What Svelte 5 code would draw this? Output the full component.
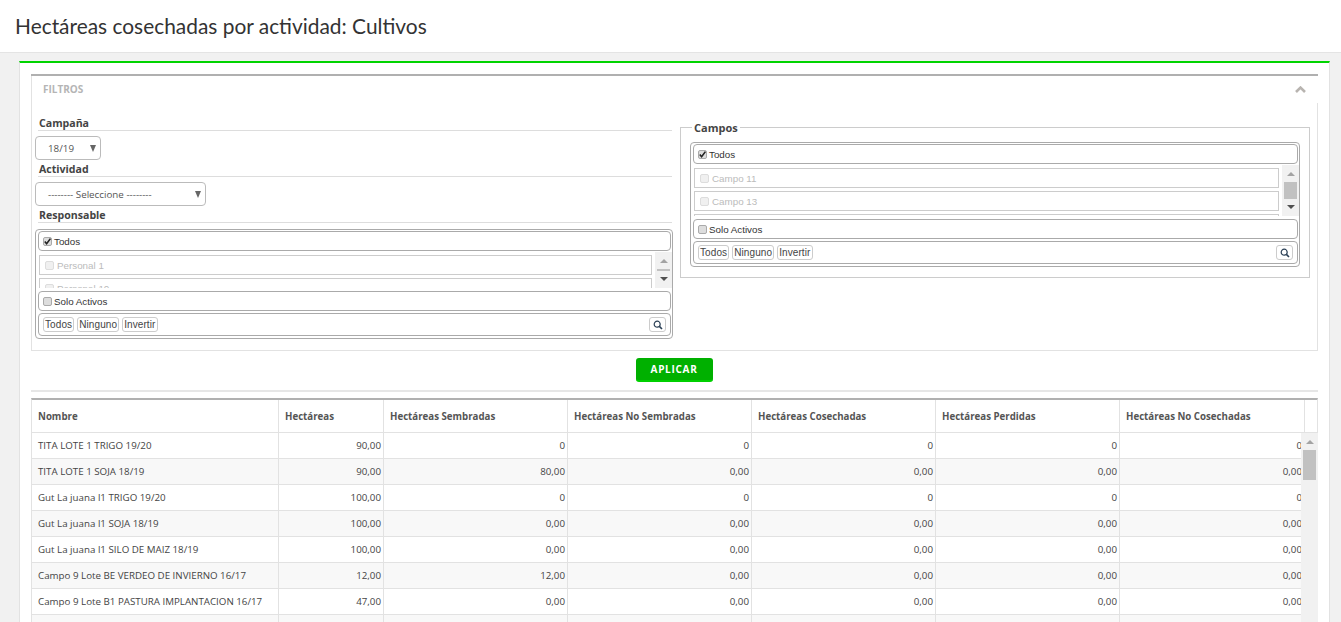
<script>
  const columns = [
    { label: 'Nombre', width: 247 },
    { label: 'Hectáreas', width: 105 },
    { label: 'Hectáreas Sembradas', width: 184 },
    { label: 'Hectáreas No Sembradas', width: 184 },
    { label: 'Hectáreas Cosechadas', width: 184 },
    { label: 'Hectáreas Perdidas', width: 184 },
    { label: 'Hectáreas No Cosechadas', width: 185 }
  ];
  const rows = [
    ['TITA LOTE 1 TRIGO 19/20', '90,00', '0', '0', '0', '0', '0'],
    ['TITA LOTE 1 SOJA 18/19', '90,00', '80,00', '0,00', '0,00', '0,00', '0,00'],
    ['Gut La juana l1 TRIGO 19/20', '100,00', '0', '0', '0', '0', '0'],
    ['Gut La juana l1 SOJA 18/19', '100,00', '0,00', '0,00', '0,00', '0,00', '0,00'],
    ['Gut La juana l1 SILO DE MAIZ 18/19', '100,00', '0,00', '0,00', '0,00', '0,00', '0,00'],
    ['Campo 9 Lote BE VERDEO DE INVIERNO 16/17', '12,00', '12,00', '0,00', '0,00', '0,00', '0,00'],
    ['Campo 9 Lote B1 PASTURA IMPLANTACION 16/17', '47,00', '0,00', '0,00', '0,00', '0,00', '0,00'],
    ['', '', '', '', '', '', '']
  ];
</script>

{#snippet check(checked)}
  <span class="cb">
    {#if checked}
      <svg width="9" height="9" viewBox="0 0 9 9"><path d="M1.8 4.6 L3.6 6.8 L7.4 1.6" fill="none" stroke="#222" stroke-width="1.6" /></svg>
    {/if}
  </span>
{/snippet}

{#snippet multi(items, thumbClass)}
  <div class="multi">
    <div class="bar">{@render check(true)}<span>Todos</span></div>
    <div class="list">
      <div class="items">
        {#each items as item}
          <div class="item">
            {#if item}<span class="cb off"></span><span>{item}</span>{/if}
          </div>
        {/each}
      </div>
      <div class="sb">
        <span class="up"></span>
        <span class="track"><span class={thumbClass}></span></span>
        <span class="down"></span>
      </div>
    </div>
    <div class="bar solo">{@render check(false)}<span>Solo Activos</span></div>
    <div class="actions">
      <button>Todos</button>
      <button>Ninguno</button>
      <button>Invertir</button>
      <button class="search" aria-label="Buscar">
        <svg width="10" height="10" viewBox="0 0 10 10"><circle cx="4.2" cy="4.2" r="3" fill="none" stroke="#2a3f55" stroke-width="1.2" /><path d="M6.4 6.4 L9 9" stroke="#2a3f55" stroke-width="1.6" /></svg>
      </button>
    </div>
  </div>
{/snippet}

<header class="top"><h1>Hectáreas cosechadas por actividad: Cultivos</h1></header>

<main class="card">
  <section class="panel">
    <div class="panel-head">
      <span>FILTROS</span>
      <svg width="11" height="7" viewBox="0 0 11 7"><path d="M1 6 L5.5 1.6 L10 6" fill="none" stroke="#b8b4b0" stroke-width="2.6" /></svg>
    </div>
    <div class="filters">
      <div class="col-left">
        <div class="legend">Campaña</div>
        <div class="select small"><span>18/19</span><i></i></div>
        <div class="legend">Actividad</div>
        <div class="select wide"><span>-------- Seleccione --------</span><i></i></div>
        <div class="legend last">Responsable</div>
        {@render multi(['Personal 1', 'Personal 10'], 'thumb thin')}
      </div>
      <fieldset class="campos">
        <legend>Campos</legend>
        {@render multi(['Campo 11', 'Campo 13', ''], 'thumb')}
      </fieldset>
    </div>
    <div class="apply"><button class="aplicar">APLICAR</button></div>
  </section>

  <section class="grid">
    <table class="thead">
      <colgroup>
        {#each columns as c}<col style="width:{c.width}px" />{/each}
        <col />
      </colgroup>
      <thead>
        <tr>
          {#each columns as c}<th>{c.label}</th>{/each}
          <th class="filler"></th>
        </tr>
      </thead>
    </table>
    <div class="body-row">
      <div class="body-clip">
        <table class="tbody">
          <colgroup>
            {#each columns as c}<col style="width:{c.width}px" />{/each}
          </colgroup>
          <tbody>
            {#each rows as row}
              <tr>
                {#each row as value, i}
                  <td class:num={i > 0}>{value}</td>
                {/each}
              </tr>
            {/each}
          </tbody>
        </table>
      </div>
      <div class="vscroll">
        <span class="up"></span>
        <span class="vthumb"></span>
      </div>
    </div>
  </section>
</main>

<style>
  :global(body) {
    margin: 0;
    background: #f1f1f1;
    height: 622px;
    overflow: hidden;
    font-family: "Open Sans", sans-serif;
    color: #444;
  }
  .top {
    height: 52px;
    background: #fff;
    border-bottom: 1px solid #e4e4e4;
    display: flex;
    align-items: center;
    padding-left: 15px;
  }
  h1 {
    margin: 0;
    font: 400 20.9px/28px Lato, sans-serif;
    color: #333;
  }
  .card {
    margin: 8px 11px 0 19px;
    height: 600px;
    background: #fff;
    border-top: 2px solid #00d400;
    border-left: 1px solid #e2e2e2;
    border-right: 1px solid #e2e2e2;
    padding: 11px 11px 0 11px;
  }
  .panel {
    border-top: 2px solid #b0b0b0;
  }
  .panel-head {
    box-sizing: border-box;
    height: 27px;
    display: flex;
    align-items: center;
    justify-content: space-between;
    padding: 0 12px 1px 11px;
    border-left: 1px solid #e2e2e2;
    font-size: 10px;
    font-weight: 700;
    color: #b5b5b5;
  }
  .filters {
    display: grid;
    grid-template-columns: 638px 630px;
    column-gap: 7px;
    align-items: start;
    padding: 12px 7px 11px 3px;
    border: 1px solid #e2e2e2;
    border-width: 0 1px 1px 1px;
  }
  .legend {
    height: 14px;
    padding: 1px 0 0 1px;
    line-height: 15px;
    margin: 0 1px 5px 3px;
    border-bottom: 1px solid #ddd;
    font-size: 10.6px;
    font-weight: 700;
    color: #444;
  }
  .legend.last { margin-bottom: 6px; }
  .select {
    position: relative;
    box-sizing: border-box;
    height: 24px;
    margin-bottom: 1px;
    display: flex;
    align-items: center;
    padding-left: 12px;
    border: 1px solid #bbb;
    border-radius: 4px;
    font-size: 9.8px;
    color: #555;
  }
  .select i {
    position: absolute;
    top: 8px;
    right: 4px;
    border: 3.5px solid transparent;
    border-top: 7px solid #666;
    border-bottom: 0;
  }
  .small { width: 66px; }
  .wide { width: 171px; }
  .multi {
    border: 1px solid #aaa;
    border-radius: 4px;
    padding: 1px 1px 2px 2px;
    font-family: "Liberation Sans", sans-serif;
    font-size: 9.8px;
  }
  .bar {
    box-sizing: border-box;
    height: 20px;
    display: flex;
    align-items: center;
    gap: 2px;
    padding: 1px 0 0 4px;
    border: 1px solid #aaa;
    border-radius: 4px;
    color: #333;
  }
  .solo { margin-top: 3px; }
  .cb {
    flex: none;
    box-sizing: border-box;
    width: 9px;
    height: 9px;
    display: block;
    background: #ddd;
    border: 1px solid #aaa;
    border-radius: 2px;
    position: relative;
  }
  .cb svg {
    position: absolute;
    left: -1px;
    top: -1px;
  }
  .cb.off {
    background: #f0f0f0;
    border-color: #ddd;
  }
  .list {
    display: flex;
    gap: 3px;
    margin: 1px -1px 0 1px;
    overflow: hidden;
  }
  .list .items {
    flex: 1;
    min-width: 0;
    padding-top: 3px;
    height: var(--list-h, 33px);
    overflow: hidden;
  }
  .campos .list .items { --list-h: 48px; }
  .item {
    box-sizing: border-box;
    height: 20px;
    margin-bottom: 3px;
    display: flex;
    align-items: center;
    gap: 3px;
    padding: 1px 0 0 5px;
    border: 1px solid #ccc;
    color: #bbb;
  }
  .sb {
    flex: none;
    width: 17px;
    background: #f1f1f1;
    display: flex;
    flex-direction: column;
    align-items: center;
  }
  .up, .down {
    flex: none;
    display: block;
    width: 0;
    height: 0;
    border: 4px solid transparent;
  }
  .up {
    border-top: 0;
    border-bottom: 4px solid #a3a3a3;
    margin-top: 7px;
  }
  .down {
    border-bottom: 0;
    border-top: 4px solid #505050;
    margin-bottom: 7px;
  }
  .track {
    flex: 1;
    width: 13px;
    display: flex;
    align-items: center;
  }
  .thumb {
    display: block;
    width: 13px;
    height: 17px;
    background: #c1c1c1;
  }
  .thumb.thin { height: 2px; }
  .actions {
    box-sizing: border-box;
    height: 23px;
    margin-top: 2px;
    display: flex;
    align-items: center;
    gap: 3px;
    padding: 0 4px;
    border: 1px solid #aaa;
    border-radius: 4px;
  }
  .actions button {
    box-sizing: border-box;
    height: 15px;
    padding: 0 1px;
    background: #fff;
    border: 1px solid #ccc;
    border-radius: 3px;
    font: 10px/12px "Liberation Sans", sans-serif;
    letter-spacing: 0.1px;
    color: #444;
  }
  .actions .search {
    width: 17px;
    margin-left: auto;
    display: flex;
    align-items: center;
    justify-content: center;
    padding: 0;
  }
  .campos {
    box-sizing: border-box;
    margin: 4px 0 0;
    padding: 7px 9px 10px 9px;
    min-width: 0;
    border: 1px solid #ccc;
  }
  .campos legend {
    margin-left: 2px;
    padding: 0 2px;
    height: 16px;
    font-size: 11px;
    line-height: 18px;
    font-weight: 700;
    color: #444;
  }
  .apply {
    height: 38px;
    padding: 0 1px 1px 0;
    display: flex;
    align-items: center;
    justify-content: center;
    border-bottom: 2px solid #e6e6e6;
  }
  .aplicar {
    box-sizing: border-box;
    width: 77px;
    height: 24px;
    padding: 0;
    background: #00b000;
    border: 0;
    border-bottom: 2px solid #00d000;
    border-radius: 3px;
    color: #fff;
    font: 700 10px "Open Sans", sans-serif;
    letter-spacing: 0.7px;
  }
  .grid {
    margin-top: 6px;
    border-top: 2px solid #b0b0b0;
    border-left: 1px solid #e2e2e2;
    border-right: 1px solid #e2e2e2;
  }
  table {
    border-collapse: separate;
    border-spacing: 0;
    table-layout: fixed;
  }
  .thead { width: 100%; }
  th {
    box-sizing: border-box;
    height: 33px;
    padding: 0 6px;
    text-align: left;
    font-size: 9.7px;
    font-weight: 700;
    color: #555;
    border-right: 1px solid #e2e2e2;
    border-bottom: 1px solid #e2e2e2;
  }
  th.filler { border-right: 0; }
  .body-row { display: flex; }
  .body-clip {
    flex: 1;
    min-width: 0;
    overflow: hidden;
  }
  .tbody { width: 1273px; }
  td {
    box-sizing: border-box;
    height: 26px;
    padding: 0 6px;
    font-size: 9.75px;
    color: #444;
    white-space: nowrap;
    border-right: 1px solid #e2e2e2;
    border-bottom: 1px solid #e2e2e2;
  }
  td.num {
    text-align: right;
    padding-right: 2px;
  }
  tr:nth-child(even) td { background: #f8f8f8; }
  .vscroll {
    flex: none;
    width: 17px;
    margin-right: -1px;
    background: #f1f1f1;
    display: flex;
    flex-direction: column;
    align-items: center;
  }
  .vthumb {
    display: block;
    width: 13px;
    height: 30px;
    margin-top: 6px;
    background: #c1c1c1;
  }
</style>
